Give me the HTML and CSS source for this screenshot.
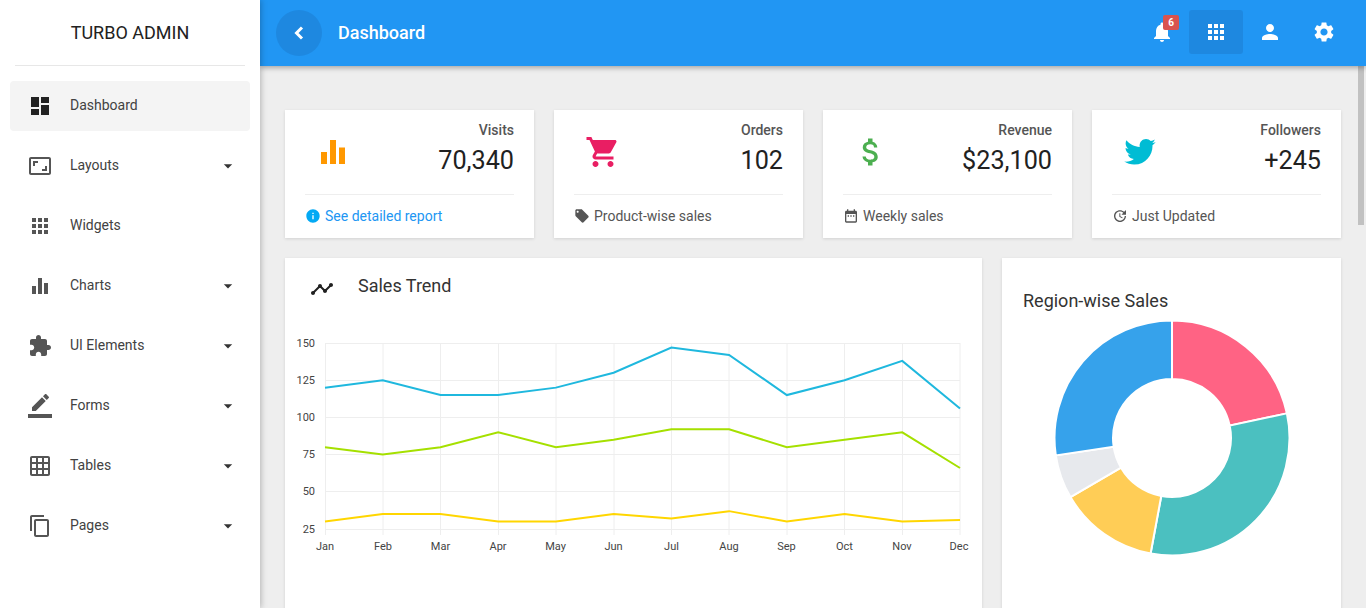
FILE: index.html
```html
<!DOCTYPE html>
<html lang="en">
<head>
    <meta charset="UTF-8">
    <meta name="viewport" content="width=device-width, initial-scale=1.0">
    <title>Turbo Admin</title>
    <link rel="stylesheet" href="styles.css">
</head>
<body>
    <aside class="sidebar">
        <div class="logo">TURBO ADMIN</div>
        <ul class="nav">
            <li class="nav-item active">
                <svg class="nav-icon" viewBox="0 0 24 24"><path d="M3 13h8V3H3v10zm0 8h8v-6H3v6zm10 0h8V11h-8v10zm0-18v6h8V3h-8z"/></svg>
                <span>Dashboard</span>
            </li>
            <li class="nav-item">
                <svg class="nav-icon" viewBox="0 0 24 24"><path d="M19 12h-2v3h-3v2h5v-5zM7 9h3V7H5v5h2V9zm14-6H3c-1.1 0-2 .9-2 2v14c0 1.1.9 2 2 2h18c1.1 0 2-.9 2-2V5c0-1.1-.9-2-2-2zm0 16.01H3V4.99h18v14.02z"/></svg>
                <span>Layouts</span>
                <svg class="caret" viewBox="0 0 24 24"><path d="M7 10l5 5 5-5z"/></svg>
            </li>
            <li class="nav-item">
                <svg class="nav-icon" viewBox="0 0 24 24"><path d="M4 8h4V4H4v4zm6 12h4v-4h-4v4zm-6 0h4v-4H4v4zm0-6h4v-4H4v4zm6 0h4v-4h-4v4zm6-10v4h4V4h-4zm-6 4h4V4h-4v4zm6 6h4v-4h-4v4zm0 6h4v-4h-4v4z"/></svg>
                <span>Widgets</span>
            </li>
            <li class="nav-item">
                <svg class="nav-icon" viewBox="0 0 24 24"><path d="M4 12h4v8H4zM10 4h4v16h-4zM16 9h4v11h-4z"/></svg>
                <span>Charts</span>
                <svg class="caret" viewBox="0 0 24 24"><path d="M7 10l5 5 5-5z"/></svg>
            </li>
            <li class="nav-item">
                <svg class="nav-icon" viewBox="0 0 24 24"><path d="M20.5 11H19V7c0-1.1-.9-2-2-2h-4V3.5C13 2.12 11.88 1 10.5 1S8 2.12 8 3.5V5H4c-1.1 0-1.99.9-1.99 2v3.8H3.5c1.49 0 2.7 1.21 2.7 2.7s-1.21 2.7-2.7 2.7H2V20c0 1.1.9 2 2 2h3.8v-1.5c0-1.49 1.21-2.7 2.7-2.7 1.49 0 2.7 1.21 2.7 2.7V22H17c1.1 0 2-.9 2-2v-4h1.5c1.38 0 2.5-1.12 2.5-2.5S21.88 11 20.5 11z"/></svg>
                <span>UI Elements</span>
                <svg class="caret" viewBox="0 0 24 24"><path d="M7 10l5 5 5-5z"/></svg>
            </li>
            <li class="nav-item">
                <svg class="nav-icon" viewBox="0 0 24 24"><path d="M17.75 7L14 3.25l-10 10V17h3.75l10-10zm2.96-2.96c.39-.39.39-1.02 0-1.41L18.37.29c-.39-.39-1.02-.39-1.41 0L15 2.25 18.75 6l1.96-1.96z"/><path d="M0 20h24v4H0z"/></svg>
                <span>Forms</span>
                <svg class="caret" viewBox="0 0 24 24"><path d="M7 10l5 5 5-5z"/></svg>
            </li>
            <li class="nav-item">
                <svg class="nav-icon" viewBox="0 0 24 24"><path d="M20 2H4c-1.1 0-2 .9-2 2v16c0 1.1.9 2 2 2h16c1.1 0 2-.9 2-2V4c0-1.1-.9-2-2-2zM8 20H4v-4h4v4zm0-6H4v-4h4v4zm0-6H4V4h4v4zm6 12h-4v-4h4v4zm0-6h-4v-4h4v4zm0-6h-4V4h4v4zm6 12h-4v-4h4v4zm0-6h-4v-4h4v4zm0-6h-4V4h4v4z"/></svg>
                <span>Tables</span>
                <svg class="caret" viewBox="0 0 24 24"><path d="M7 10l5 5 5-5z"/></svg>
            </li>
            <li class="nav-item">
                <svg class="nav-icon" viewBox="0 0 24 24"><path d="M16 1H4c-1.1 0-2 .9-2 2v14h2V3h12V1zm3 4H8c-1.1 0-2 .9-2 2v14c0 1.1.9 2 2 2h11c1.1 0 2-.9 2-2V7c0-1.1-.9-2-2-2zm0 16H8V7h11v14z"/></svg>
                <span>Pages</span>
                <svg class="caret" viewBox="0 0 24 24"><path d="M7 10l5 5 5-5z"/></svg>
            </li>
        </ul>
    </aside>

    <div class="main">
        <header class="topbar">
            <button class="back-btn">
                <svg viewBox="0 0 24 24"><polyline points="15,6.5 9.5,12 15,17.5"/></svg>
            </button>
            <div class="page-title">Dashboard</div>
            <div class="top-actions">
                <div class="top-btn">
                    <svg viewBox="0 0 24 24"><path d="M12 22c1.1 0 2-.9 2-2h-4c0 1.1.89 2 2 2zm6-6v-5c0-3.07-1.64-5.64-4.5-6.32V4c0-.83-.67-1.5-1.5-1.5s-1.5.67-1.5 1.5v.68C7.63 5.36 6 7.92 6 11v5l-2 2v1h16v-1l-2-2z"/></svg>
                    <span class="badge">6</span>
                </div>
                <div class="top-btn selected">
                    <svg viewBox="0 0 24 24"><path d="M4 8h4V4H4v4zm6 12h4v-4h-4v4zm-6 0h4v-4H4v4zm0-6h4v-4H4v4zm6 0h4v-4h-4v4zm6-10v4h4V4h-4zm-6 4h4V4h-4v4zm6 6h4v-4h-4v4zm0 6h4v-4h-4v4z"/></svg>
                </div>
                <div class="top-btn">
                    <svg viewBox="0 0 24 24"><path d="M12 12c2.21 0 4-1.79 4-4s-1.79-4-4-4-4 1.79-4 4 1.79 4 4 4zm0 2c-2.67 0-8 1.34-8 4v2h16v-2c0-2.66-5.33-4-8-4z"/></svg>
                </div>
                <div class="top-btn">
                    <svg viewBox="0 0 24 24"><path d="M19.14 12.94c.04-.3.06-.61.06-.94 0-.32-.02-.64-.07-.94l2.03-1.58c.18-.14.23-.41.12-.61l-1.92-3.32c-.12-.22-.37-.29-.59-.22l-2.39.96c-.5-.38-1.03-.7-1.62-.94l-.36-2.54c-.04-.24-.24-.41-.48-.41h-3.84c-.24 0-.43.17-.47.41l-.36 2.54c-.59.24-1.13.57-1.62.94l-2.39-.96c-.22-.08-.47 0-.59.22L2.74 8.87c-.12.21-.08.47.12.61l2.03 1.58c-.05.3-.09.63-.09.94s.02.64.07.94l-2.03 1.58c-.18.14-.23.41-.12.61l1.92 3.32c.12.22.37.29.59.22l2.39-.96c.5.38 1.03.7 1.62.94l.36 2.54c.05.24.24.41.48.41h3.84c.24 0 .44-.17.47-.41l.36-2.54c.59-.24 1.13-.56 1.62-.94l2.39.96c.22.08.47 0 .59-.22l1.92-3.32c.12-.22.07-.47-.12-.61l-2.01-1.58zM12 15.6c-1.98 0-3.6-1.62-3.6-3.6s1.62-3.6 3.6-3.6 3.6 1.62 3.6 3.6-1.62 3.6-3.6 3.6z"/></svg>
                </div>
            </div>
        </header>

        <div class="content">
            <div class="stats">
                <div class="card stat">
                    <div class="stat-top">
                        <div class="stat-icon">
                            <svg class="icon-bars" viewBox="0 0 24 24"><path d="M4 12h4v8H4zM10 4h4v16h-4zM16 9h4v11h-4z"/></svg>
                        </div>
                        <div class="stat-text">
                            <div class="stat-label">Visits</div>
                            <div class="stat-value">70,340</div>
                        </div>
                    </div>
                    <div class="stat-foot link">
                        <svg class="foot-icon info" viewBox="0 0 24 24"><path d="M12 2C6.48 2 2 6.48 2 12s4.48 10 10 10 10-4.48 10-10S17.52 2 12 2zm1 15h-2v-6h2v6zm0-8h-2V7h2v2z"/></svg>
                        <span>See detailed report</span>
                    </div>
                </div>
                <div class="card stat">
                    <div class="stat-top">
                        <div class="stat-icon">
                            <svg class="icon-cart" viewBox="0 0 24 24"><path d="M7 18c-1.1 0-1.99.9-1.99 2S5.9 22 7 22s2-.9 2-2-.9-2-2-2zM1 2v2h2l3.6 7.59-1.35 2.45c-.16.28-.25.61-.25.96 0 1.1.9 2 2 2h12v-2H7.42c-.14 0-.25-.11-.25-.25l.03-.12.9-1.63h7.45c.75 0 1.41-.41 1.75-1.03l3.58-6.47c.08-.14.12-.31.12-.48 0-.55-.45-1-1-1H5.21l-.94-2H1zm16 16c-1.1 0-1.99.9-1.99 2s.89 2 1.99 2 2-.9 2-2-.9-2-2-2z"/></svg>
                        </div>
                        <div class="stat-text">
                            <div class="stat-label">Orders</div>
                            <div class="stat-value">102</div>
                        </div>
                    </div>
                    <div class="stat-foot">
                        <svg class="foot-icon" viewBox="0 0 24 24"><path d="M21.41 11.58l-9-9C12.05 2.22 11.55 2 11 2H4c-1.1 0-2 .9-2 2v7c0 .55.22 1.05.59 1.42l9 9c.36.36.86.58 1.41.58.55 0 1.05-.22 1.41-.59l7-7c.37-.36.59-.86.59-1.41 0-.55-.23-1.06-.59-1.42zM5.5 7C4.67 7 4 6.33 4 5.5S4.67 4 5.5 4 7 4.67 7 5.5 6.33 7 5.5 7z"/></svg>
                        <span>Product-wise sales</span>
                    </div>
                </div>
                <div class="card stat">
                    <div class="stat-top">
                        <div class="stat-icon">
                            <svg class="icon-money" viewBox="0 0 24 24"><path d="M11.8 10.9c-2.27-.59-3-1.2-3-2.15 0-1.09 1.01-1.85 2.7-1.85 1.78 0 2.44.85 2.5 2.1h2.21c-.07-1.72-1.12-3.3-3.21-3.81V3h-3v2.16c-1.94.42-3.5 1.68-3.5 3.61 0 2.31 1.91 3.46 4.7 4.13 2.5.6 3 1.48 3 2.41 0 .69-.49 1.79-2.7 1.79-2.06 0-2.87-.92-2.98-2.1h-2.2c.12 2.19 1.76 3.42 3.68 3.83V21h3v-2.15c1.95-.37 3.5-1.5 3.5-3.55 0-2.84-2.43-3.81-4.7-4.4z"/></svg>
                        </div>
                        <div class="stat-text">
                            <div class="stat-label">Revenue</div>
                            <div class="stat-value">$23,100</div>
                        </div>
                    </div>
                    <div class="stat-foot">
                        <svg class="foot-icon" viewBox="0 0 24 24"><path d="M9 11H7v2h2v-2zm4 0h-2v2h2v-2zm4 0h-2v2h2v-2zm2-7h-1V2h-2v2H8V2H6v2H5c-1.11 0-1.99.9-1.99 2L3 20c0 1.1.89 2 2 2h14c1.1 0 2-.9 2-2V6c0-1.1-.9-2-2-2zm0 16H5V9h14v11z"/></svg>
                        <span>Weekly sales</span>
                    </div>
                </div>
                <div class="card stat">
                    <div class="stat-top">
                        <div class="stat-icon">
                            <svg class="icon-twitter" viewBox="0 0 24 24"><path d="M22.46,6C21.69,6.35 20.86,6.58 20,6.69C20.88,6.16 21.56,5.32 21.88,4.31C21.05,4.81 20.13,5.16 19.16,5.36C18.37,4.5 17.26,4 16,4C13.65,4 11.73,5.92 11.73,8.29C11.73,8.63 11.77,8.96 11.84,9.27C8.28,9.09 5.11,7.38 3,4.79C2.63,5.42 2.42,6.16 2.42,6.94C2.42,8.43 3.17,9.75 4.33,10.5C3.62,10.5 2.96,10.3 2.38,10C2.38,10 2.38,10 2.38,10.03C2.38,12.11 3.86,13.85 5.82,14.24C5.46,14.34 5.08,14.39 4.69,14.39C4.42,14.39 4.15,14.36 3.89,14.31C4.43,16 6,17.26 7.89,17.29C6.43,18.45 4.58,19.13 2.56,19.13C2.22,19.13 1.88,19.11 1.54,19.07C3.44,20.29 5.7,21 8.12,21C16,21 20.33,14.46 20.33,8.79C20.33,8.6 20.33,8.42 20.32,8.23C21.16,7.63 21.88,6.87 22.46,6Z"/></svg>
                        </div>
                        <div class="stat-text">
                            <div class="stat-label">Followers</div>
                            <div class="stat-value">+245</div>
                        </div>
                    </div>
                    <div class="stat-foot">
                        <svg class="foot-icon" viewBox="0 0 24 24"><path d="M21 10.12h-6.78l2.74-2.82c-2.73-2.7-7.15-2.8-9.88-.1-2.73 2.71-2.73 7.08 0 9.79s7.15 2.71 9.88 0C18.32 15.65 19 14.08 19 12.1h2c0 1.98-.88 4.55-2.64 6.29-3.51 3.48-9.21 3.48-12.72 0-3.5-3.47-3.53-9.11-.02-12.58s9.14-3.47 12.65 0L21 3v7.12zM12.5 8v4.25l3.5 2.08-.72 1.21L11 13V8h1.5z"/></svg>
                        <span>Just Updated</span>
                    </div>
                </div>
            </div>

            <div class="charts">
                <div class="card trend">
                    <div class="trend-head">
                        <svg class="trend-icon" viewBox="0 0 24 24"><path d="M23 8c0 1.1-.9 2-2 2-.18 0-.35-.02-.51-.07l-3.56 3.55c.05.16.07.34.07.52 0 1.1-.9 2-2 2s-2-.9-2-2c0-.18.02-.36.07-.52l-2.55-2.55c-.16.05-.34.07-.52.07s-.36-.02-.52-.07l-4.55 4.56c.05.16.07.33.07.51 0 1.1-.9 2-2 2s-2-.9-2-2 .9-2 2-2c.18 0 .35.02.51.07l4.56-4.55C8.02 9.36 8 9.18 8 9c0-1.1.9-2 2-2s2 .9 2 2c0 .18-.02.36-.07.52l2.55 2.55c.16-.05.34-.07.52-.07s.36.02.52.07l3.55-3.56C19.02 8.35 19 8.18 19 8c0-1.1.9-2 2-2s2 .9 2 2z"/></svg>
                        <h3 class="card-title">Sales Trend</h3>
                    </div>
                    <svg class="line-chart" viewBox="0 0 697 240">
                        <g class="grid">
                            <path d="M40 13.5H675M40 50.5H675M40 87.5H675M40 124.5H675M40 161.5H675M40 199.5H675"/>
                            <path d="M40.5 13V205M98 13V205M155.5 13V205M213.5 13V205M271 13V205M329 13V205M386.5 13V205M444 13V205M502 13V205M559.5 13V205M617.5 13V205M675 13V205"/>
                        </g>
                        <g class="y-labels">
                            <text x="30" y="17">150</text>
                            <text x="30" y="54">125</text>
                            <text x="30" y="91">100</text>
                            <text x="30" y="128">75</text>
                            <text x="30" y="165">50</text>
                            <text x="30" y="203">25</text>
                        </g>
                        <g class="x-labels">
                            <text x="40" y="220">Jan</text>
                            <text x="98" y="220">Feb</text>
                            <text x="155.5" y="220">Mar</text>
                            <text x="213" y="220">Apr</text>
                            <text x="270.5" y="220">May</text>
                            <text x="328.5" y="220">Jun</text>
                            <text x="386.5" y="220">Jul</text>
                            <text x="444" y="220">Aug</text>
                            <text x="501.5" y="220">Sep</text>
                            <text x="559.5" y="220">Oct</text>
                            <text x="617" y="220">Nov</text>
                            <text x="674" y="220">Dec</text>
                        </g>
                        <polyline class="line blue" points="40,57.64 97.73,50.2 155.45,65.08 213.18,65.08 270.91,57.64 328.64,42.76 386.36,17.46 444.09,24.9 501.82,65.08 559.55,50.2 617.27,30.86 675,78.47"/>
                        <polyline class="line green" points="40,117.16 97.73,124.6 155.45,117.16 213.18,102.28 270.91,117.16 328.64,109.72 386.36,99.3 444.09,99.3 501.82,117.16 559.55,109.72 617.27,102.28 675,138"/>
                        <polyline class="line yellow" points="40,191.56 97.73,184.12 155.45,184.12 213.18,191.56 270.91,191.56 328.64,184.12 386.36,188.58 444.09,181.14 501.82,191.56 559.55,184.12 617.27,191.56 675,190.07"/>
                    </svg>
                </div>
                <div class="card region">
                    <h3 class="card-title">Region-wise Sales</h3>
                    <svg class="donut" viewBox="-120 -120 240 240">
                        <path fill="#ff6384" d="M0 -117.5A117.5 117.5 0 0 1 114.89 -24.63L57.69 -12.37A59 59 0 0 0 0 -59Z"/>
                        <path fill="#4bc0c0" d="M114.89 -24.63A117.5 117.5 0 0 1 -21.41 115.54L-10.75 58.01A59 59 0 0 0 57.69 -12.37Z"/>
                        <path fill="#ffcd56" d="M-21.41 115.54A117.5 117.5 0 0 1 -101.56 59.1L-50.99 29.68A59 59 0 0 0 -10.75 58.01Z"/>
                        <path fill="#e7e9ed" d="M-101.56 59.1A117.5 117.5 0 0 1 -116.21 17.37L-58.35 8.72A59 59 0 0 0 -50.99 29.68Z"/>
                        <path fill="#36a2eb" d="M-116.21 17.37A117.5 117.5 0 0 1 0 -117.5L0 -59A59 59 0 0 0 -58.35 8.72Z"/>
                    </svg>
                </div>
            </div>
        </div>
        <div class="scroll-thumb"></div>
    </div>
</body>
</html>
```

FILE: styles.css
```css
* {
    box-sizing: border-box;
}
html, body {
    height: 100%;
}
body {
    margin: 0;
    display: flex;
    overflow: hidden;
    font-family: Roboto, "Liberation Sans", sans-serif;
    font-size: 14px;
    color: #333;
    background-color: #eee;
}

/* sidebar */
.sidebar {
    width: 260px;
    flex-shrink: 0;
    background-color: #fff;
    box-shadow: 1px 0 6px rgba(0, 0, 0, 0.25);
    position: relative;
    z-index: 2;
}
.logo {
    height: 66px;
    margin: 0 15px;
    display: flex;
    align-items: center;
    justify-content: center;
    border-bottom: 1px solid #e7e7e7;
    font-size: 18px;
    color: #212121;
}
.nav {
    list-style: none;
    margin: 15px 10px 0;
    padding: 0;
}
.nav-item {
    height: 50px;
    margin-bottom: 10px;
    padding: 0 12px 0 18px;
    display: flex;
    align-items: center;
    border-radius: 4px;
    color: #424242;
}
.nav-item span {
    margin-bottom: 2px;
}
.nav-item.active {
    background-color: #f4f4f4;
}
.nav-icon {
    width: 24px;
    height: 24px;
    margin-right: 18px;
    fill: #555;
}
.active .nav-icon {
    fill: #212121;
}
.caret {
    width: 20px;
    height: 20px;
    margin-left: auto;
    fill: #333;
}

/* top bar */
.main {
    flex: 1;
    min-width: 0;
    display: flex;
    flex-direction: column;
    position: relative;
}
.topbar {
    height: 66px;
    flex-shrink: 0;
    padding: 0 15px 0 16px;
    display: flex;
    align-items: center;
    background-color: #2196f3;
    box-shadow: 0 2px 5px rgba(0, 0, 0, 0.3);
    position: relative;
    z-index: 1;
}
.back-btn {
    width: 46px;
    height: 46px;
    padding: 0;
    border: 0;
    border-radius: 50%;
    display: flex;
    align-items: center;
    justify-content: center;
    background-color: #1e88e0;
}
.back-btn svg {
    width: 24px;
    height: 24px;
    fill: none;
    stroke: #fff;
    stroke-width: 3;
}
.page-title {
    margin-left: 16px;
    margin-bottom: 2px;
    font-size: 18px;
    font-weight: 500;
    color: #fff;
}
.top-actions {
    margin-left: auto;
    margin-bottom: 2px;
    display: flex;
}
.top-btn {
    width: 54px;
    height: 44px;
    display: flex;
    align-items: center;
    justify-content: center;
    border-radius: 3px;
    position: relative;
}
.top-btn svg {
    width: 24px;
    height: 24px;
    fill: #fff;
}
.top-btn.selected {
    background-color: #1e88e0;
}
.badge {
    position: absolute;
    top: 5px;
    left: 28px;
    width: 16px;
    height: 15px;
    border-radius: 2px;
    background-color: #d9534f;
    color: #fff;
    font-size: 10px;
    font-weight: 700;
    line-height: 15px;
    text-align: center;
}

/* content */
.content {
    flex: 1;
    min-height: 0;
    overflow: hidden;
    padding: 44px 25px 0;
}
.card {
    background-color: #fff;
    box-shadow: 0 1px 3px rgba(0, 0, 0, 0.12);
}
.stats {
    display: grid;
    grid-template-columns: repeat(4, 1fr);
    gap: 20px;
}
.stat {
    height: 128px;
    padding: 12px 20px 0;
}
.stat-top {
    height: 73px;
    display: flex;
    justify-content: space-between;
    border-bottom: 1px solid #eee;
}
.stat-icon {
    width: 40px;
    height: 60px;
    margin-left: 8px;
    display: flex;
    align-items: center;
    justify-content: center;
}
.stat-icon svg {
    width: 36px;
    height: 36px;
    flex-shrink: 0;
}
.icon-bars {
    fill: #ff9800;
}
.icon-cart {
    margin-left: 2px;
    fill: #e91e63;
}
.icon-money {
    fill: #4caf50;
}
.icon-twitter {
    margin-bottom: 2px;
    fill: #00bcd4;
}
.stat-text {
    text-align: right;
}
.stat-label {
    font-weight: 500;
    line-height: 16px;
    color: #555;
}
.stat-value {
    margin-top: 8px;
    font-size: 25.2px;
    line-height: 30px;
    color: #212121;
}
.stat-foot {
    height: 43px;
    padding-bottom: 2px;
    display: flex;
    align-items: center;
    gap: 4px;
    color: #555;
}
.stat-foot.link {
    color: #2196f3;
}
.foot-icon {
    width: 16px;
    height: 16px;
    fill: #555;
}
.foot-icon.info {
    fill: #03a9f4;
}

/* charts */
.charts {
    margin-top: 20px;
    display: grid;
    grid-template-columns: 697px 339px;
    gap: 20px;
}
.card-title {
    margin: 0;
    font-size: 18px;
    font-weight: 400;
    color: #333;
}
.trend {
    height: 420px;
}
.trend-head {
    height: 72px;
    padding: 16px 0 0 25px;
    display: flex;
    align-items: flex-start;
}
.trend-icon {
    width: 24px;
    height: 24px;
    margin-top: 3px;
    margin-right: 24px;
    fill: #212121;
}
.trend-head .card-title {
    line-height: 24px;
}
.line-chart {
    display: block;
    width: 697px;
    height: 240px;
}
.grid path {
    fill: none;
    stroke: #eee;
    stroke-width: 1;
}
.y-labels text, .x-labels text {
    font-family: Roboto, "Liberation Sans", sans-serif;
    font-size: 11px;
    fill: #444;
}
.y-labels text {
    text-anchor: end;
}
.x-labels text {
    text-anchor: middle;
}
.line {
    fill: none;
    stroke-width: 2;
}
.line.blue {
    stroke: #1fb8de;
}
.line.green {
    stroke: #a5e000;
}
.line.yellow {
    stroke: #ffd600;
}
.region {
    height: 420px;
    padding: 31px 21px 0;
}
.region .card-title {
    line-height: 24px;
}
.donut {
    display: block;
    width: 240px;
    height: 240px;
    margin: 4.5px auto 0;
}
.donut path {
    stroke: #fff;
    stroke-width: 2;
}

/* scrollbar, sits over the content */
.scroll-thumb {
    position: absolute;
    top: 66px;
    right: 2px;
    width: 6px;
    height: 159px;
    background-color: #c1c1c1;
}
```
